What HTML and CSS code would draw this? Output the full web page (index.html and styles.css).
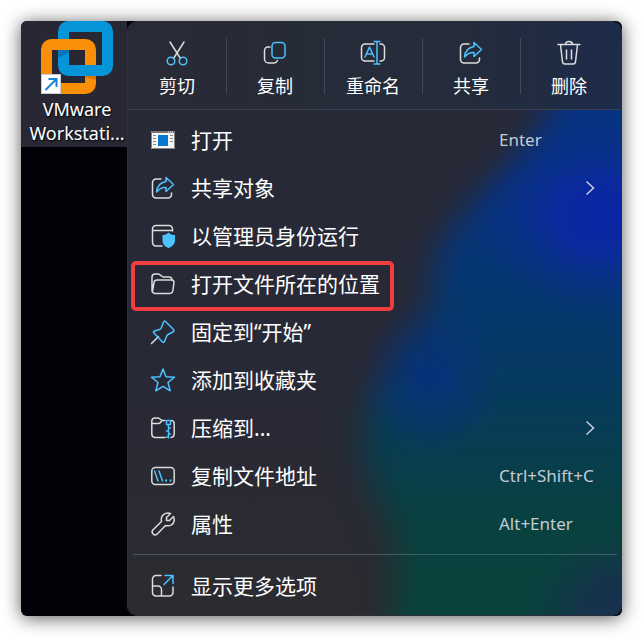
FILE: index.html
```html
<!DOCTYPE html>
<html lang="zh-CN">
<head>
<meta charset="utf-8">
<title>VMware Workstation</title>
<link rel="stylesheet" href="styles.css">
</head>
<body>
<main class="screen">
  <section class="desktop">
    <a class="shortcut" href="#">
      <svg class="shortcut-icon" viewBox="0 0 72 74" aria-hidden="true">
        <rect x="22.500" y="5.500" width="44" height="44" rx="5" fill="none" stroke="#0795d9" stroke-width="11"/>
        <path d="M17 29h11v3l-11 5z" fill="#0878b8"/>
        <rect x="5.500" y="23.500" width="44" height="44" rx="5" fill="none" stroke="#f98e07" stroke-width="11"/>
        <path d="M44 55h11v4l-11-3z" fill="#d97400"/>
        <path d="M28 44H56V55H28z" fill="#0795d9"/>
        <rect x="0.500" y="53.500" width="19" height="19" fill="#fff" stroke="#c9ccd2"/>
        <path d="M4.500 69L15 58.500M7.500 58H15.500V66" fill="none" stroke="#1583dc" stroke-width="2"/>
      </svg>
      <span class="shortcut-name">VMware<br>Workstati...</span>
    </a>
  </section>

  <nav class="menu" aria-label="快捷菜单">
    <svg class="backdrop" viewBox="0 0 495 595" preserveAspectRatio="none" aria-hidden="true">
      <defs>
        <filter id="soft" x="-50%" y="-50%" width="200%" height="200%" color-interpolation-filters="sRGB"><feGaussianBlur stdDeviation="16"/></filter>
        <linearGradient id="base" x1="0" y1="0" x2="0" y2="1">
          <stop offset="0" stop-color="#272936"/><stop offset=".6" stop-color="#282936"/><stop offset="1" stop-color="#2b2b30"/>
        </linearGradient>
        <linearGradient id="glow" x1="0" y1="0" x2="0" y2="1">
          <stop offset="0" stop-color="#073284"/><stop offset=".25" stop-color="#07337f"/><stop offset=".45" stop-color="#06386c"/>
          <stop offset=".62" stop-color="#083c56"/><stop offset=".78" stop-color="#09413f"/><stop offset="1" stop-color="#0a423b"/>
        </linearGradient>
        <radialGradient id="royal">
          <stop offset="0" stop-color="#0a26a8"/><stop offset=".35" stop-color="#0a28a2" stop-opacity=".85"/><stop offset="1" stop-color="#07307f" stop-opacity="0"/>
        </radialGradient>
        <radialGradient id="azure">
          <stop offset="0" stop-color="#06317b"/><stop offset="1" stop-color="#06317b" stop-opacity="0"/>
        </radialGradient>
        <radialGradient id="slate">
          <stop offset="0" stop-color="#18304f"/><stop offset=".4" stop-color="#16324c" stop-opacity=".9"/><stop offset="1" stop-color="#0c3c43" stop-opacity="0"/>
        </radialGradient>
        <linearGradient id="head" x1="0" y1="0" x2="1" y2="0">
          <stop offset="0" stop-color="#292a35"/><stop offset=".7" stop-color="#242c3b"/><stop offset="1" stop-color="#1d2b4b"/>
        </linearGradient>
      </defs>
      <rect width="495" height="595" fill="url(#base)"/>
      <path d="M445 20L420 90L390 140L345 180L308 230L302 290L285 330L242 375L235 430L250 480L270 520L262 640H560V20z" fill="url(#glow)" filter="url(#soft)"/>
      <ellipse cx="475" cy="195" rx="130" ry="105" fill="url(#royal)"/>
      <ellipse cx="305" cy="355" rx="70" ry="80" fill="url(#azure)"/>
      <ellipse cx="495" cy="590" rx="95" ry="85" fill="url(#slate)"/>
      <rect width="495" height="88" fill="url(#head)"/>
    </svg>

    <ul class="actions">
      <li><button class="action" type="button">
        <svg class="icon" viewBox="0 0 24 24" aria-hidden="true"><path d="M5 1L15.500 17.500M19 1L8.500 17.500" class="line"/><g class="accent"><circle cx="6" cy="20" r="3.800"/><circle cx="18" cy="20" r="3.800"/></g></svg>
        <span>剪切</span></button></li>
      <li><button class="action" type="button">
        <svg class="icon" viewBox="0 0 24 24" aria-hidden="true"><path d="M7 6H5a3.500 3.500 0 0 0-3.500 3.500V18A4 4 0 0 0 5.500 22H11a4 4 0 0 0 3.500-2.500" class="line"/><rect x="9" y="1.500" width="13" height="15.500" rx="3.500" class="accent"/></svg>
        <span>复制</span></button></li>
      <li><button class="action" type="button">
        <svg class="icon" viewBox="0 0 24 24" aria-hidden="true"><path d="M13 3H4a3.500 3.500 0 0 0-3.500 3.500v10A3.500 3.500 0 0 0 4 20h9M19 3h1a3.500 3.500 0 0 1 3.500 3.500v10A3.500 3.500 0 0 1 20 20h-1" class="line"/><path d="M4 16L8.500 6L13 16M5.500 13h6M13 .5h6M16 .5v22.500M13 23h6" class="accent"/></svg>
        <span>重命名</span></button></li>
      <li><button class="action" type="button">
        <svg class="icon" viewBox="0 0 24 24" aria-hidden="true"><path d="M10 3H5a3.500 3.500 0 0 0-3.500 3.500v12A3.500 3.500 0 0 0 5 22h12a3.500 3.500 0 0 0 3.500-3.500V17" class="line"/><path d="M15 1.500L22.500 8.500L15 15.500V11.500C10.500 11 8 13 5.500 16C6 10 9.500 6.500 15 5.500z" class="accent"/></svg>
        <span>共享</span></button></li>
      <li><button class="action" type="button">
        <svg class="icon" viewBox="0 0 24 24" aria-hidden="true"><path d="M1 3.500H23M8.500 3.500a3.500 3 0 0 1 7 0M3.500 3.500L5.500 21a2.500 2.500 0 0 0 2.500 2h8a2.500 2.500 0 0 0 2.500-2L20.500 3.500M9.500 9v9M14.500 9v9" class="line"/></svg>
        <span>删除</span></button></li>
    </ul>

    <ul class="items">
      <li><button class="item" type="button">
        <svg class="icon" viewBox="0 0 24 24" aria-hidden="true"><path d="M0 3H24V21H0z" fill="#f6f6f6"/><path d="M0 3H24V5H0z" fill="#777572"/><path d="M.5 3V20.500H23.500V3" fill="none" stroke="#858585"/><path d="M7 7H17V18H7z" fill="#0879cf"/><path d="M2 7.500h3M2 10.500h3M2 13.500h3M2 16.500h3M19 7.500h3M19 10.500h3M19 13.500h3" stroke="#888" /><path d="M17 4h1m1 0h1m1 0h1" stroke="#fff"/></svg>
        <span>打开</span><kbd>Enter</kbd></button></li>
      <li><button class="item" type="button">
        <svg class="icon" viewBox="0 0 24 24" aria-hidden="true"><path d="M10 3H5a3.500 3.500 0 0 0-3.500 3.500v12A3.500 3.500 0 0 0 5 22h12a3.500 3.500 0 0 0 3.500-3.500V17" class="line"/><path d="M15 1.500L22.500 8.500L15 15.500V11.500C10.500 11 8 13 5.500 16C6 10 9.500 6.500 15 5.500z" class="accent"/></svg>
        <span>共享对象</span><svg class="chevron" viewBox="0 0 10 16" aria-hidden="true"><path d="M1.500 1.500L8.500 8L1.500 14.500"/></svg></button></li>
      <li><button class="item" type="button">
        <svg class="icon" viewBox="0 0 24 24" aria-hidden="true"><path d="M11 22H5a3.500 3.500 0 0 1-3.500-3.500V5A3.500 3.500 0 0 1 5 1.500H18A3.500 3.500 0 0 1 21.500 5V7M1.500 6.500H21.500" class="line"/><path d="M17.500 8.500C19.500 10.500 21.500 11 24 11V16C24 20 21.500 22.500 17.500 24C13.500 22.500 11.500 20 11.500 16V11C14 11 15.500 10.500 17.500 8.500z" fill="#4cc2ff"/></svg>
        <span>以管理员身份运行</span></button></li>
      <li><button class="item marked" type="button">
        <svg class="icon" viewBox="0 0 24 24" aria-hidden="true"><path d="M3 21a2.500 2.500 0 0 1-2-3V5A3 3 0 0 1 4 2H7a3 3 0 0 1 2 .8L12 5H18A3 3 0 0 1 21 8M6 8H20.500A2.500 2.500 0 0 1 23 10.500L21.800 19A3 3 0 0 1 19 21.500H4A2.500 2.500 0 0 1 1.500 19L3 10.500A3 3 0 0 1 6 8z" class="line"/></svg>
        <span>打开文件所在的位置</span></button></li>
      <li><button class="item" type="button">
        <svg class="icon" viewBox="0 0 24 24" aria-hidden="true"><path d="M.5 23.500L7.500 16.500" class="line"/><path d="M14.500 1.500L22.500 9.500Q23.500 11 22 12L17 14.500Q16 15 15.500 16.500L13.500 21.500Q12.500 23 11.500 22L2.500 12.500Q2 11.500 3.500 11L8.500 9.500Q10 9 10.500 7.500L12.500 2Q13.500.5 14.500 1.500z" class="accent"/></svg>
        <span>固定到“开始”</span></button></li>
      <li><button class="item" type="button">
        <svg class="icon" viewBox="0 0 24 24" aria-hidden="true"><path d="M12 1L15 8.800L23.500 9.200L17 14.500L19.200 22.800L12 18.300L4.800 22.800L7 14.500L.5 9.200L9 8.800z" class="accent"/></svg>
        <span>添加到收藏夹</span></button></li>
      <li><button class="item" type="button">
        <svg class="icon" viewBox="0 0 24 24" aria-hidden="true"><path d="M14 21.500H4A3.500 3.500 0 0 1 .8 18V5A3.200 3.200 0 0 1 4 2H7a3 3 0 0 1 2 1L11 4.500H14M20.500 4.500a3 3 0 0 1 2.700 3.300V18a3.500 3.500 0 0 1-3.200 3.500M1 7.500H7Q8.500 7.500 9.500 6.500L11 4.500" class="line"/><path d="M15.500 4.500V8.500H19.500V4.500zM17.500 8.500V22M17.500 12h2M15.500 15h2M17.500 18h2M15.500 21h2" class="accent"/></svg>
        <span>压缩到...</span><svg class="chevron" viewBox="0 0 10 16" aria-hidden="true"><path d="M1.500 1.500L8.500 8L1.500 14.500"/></svg></button></li>
      <li><button class="item" type="button">
        <svg class="icon" viewBox="0 0 24 24" aria-hidden="true"><rect x=".8" y="3.500" width="22.400" height="17" rx="3.500" class="line"/><path d="M3.500 7L7 17M8 7L11.500 17" class="accent"/><path d="M14 15.500h2v2h-2zM18.500 15.500h2v2h-2z" fill="#4cc2ff"/></svg>
        <span>复制文件地址</span><kbd>Ctrl+Shift+C</kbd></button></li>
      <li><button class="item" type="button">
        <svg class="icon" viewBox="0 0 24 24" aria-hidden="true"><path d="M19.500 1.500L15.500 5.500V8.500H18.500L22.500 4.500C24 8 23 11 20.500 12.800C18.500 14 16.500 14 14.500 13.500L6 22.200A3 3 0 0 1 1.800 18L10.500 9.500C9.800 6.500 10.500 4 12.800 2.300C14.800 .8 17.200 .6 19.500 1.500z" class="line"/></svg>
        <span>属性</span><kbd>Alt+Enter</kbd></button></li>
    </ul>

    <ul class="items more">
      <li><button class="item" type="button">
        <svg class="icon" viewBox="0 0 24 24" aria-hidden="true"><path d="M10 1.500H5A3.500 3.500 0 0 0 1.500 5V18.500A3.500 3.500 0 0 0 5 22H18.500A3.500 3.500 0 0 0 22 18.500V13M1.500 12H7A3.500 3.500 0 0 1 10.500 15.500V22" class="line"/><path d="M14 1.500H22V9.500M22 1.500L13 10.500" class="accent"/></svg>
        <span>显示更多选项</span></button></li>
    </ul>
  </nav>
</main>
</body>
</html>
```
FILE: styles.css
```css
*,
*::after {
  box-sizing: border-box;
}

body {
  margin: 0;
  padding: 21px 20px 20px 21px;
  background: #fff;
  color: #fff;
  font-family: "Noto Sans", "Noto Sans CJK SC", sans-serif;
}

ul {
  margin: 0;
  padding: 0;
  list-style: none;
}

button {
  border: 0;
  background: none;
  color: inherit;
  font: inherit;
}

.screen {
  display: flex;
  overflow: hidden;
  border-radius: 6px;
  background: #020108;
  box-shadow: 0 2px 18px rgba(0, 0, 0, .65);
}

.desktop {
  flex: 0 0 106px;
}

.shortcut {
  display: flex;
  flex-direction: column;
  align-items: center;
  gap: 2px;
  height: 126px;
  padding-left: 6px;
  background: #272833;
  color: #fff;
  text-align: center;
  text-decoration: none;
  text-shadow: 1px 1px 2px #000;
}

.shortcut-icon {
  width: 72px;
  height: 74px;
}

.shortcut-name {
  font-size: 18px;
  line-height: 24px;
}

.menu {
  position: relative;
  flex: 1;
  min-width: 0;
  overflow: hidden;
  border: 1px solid rgba(110, 120, 140, .4);
  border-radius: 10px;
}

.backdrop {
  position: absolute;
  inset: 0;
  width: 100%;
  height: 100%;
}

.actions {
  position: relative;
  display: grid;
  grid-template-columns: repeat(5, 1fr);
  height: 88px;
  padding-right: 3px;
  border-bottom: 1px solid #3a4050;
}

.actions li + li {
  background: linear-gradient(#414755, #414755) 0 16px / 1px 56px no-repeat;
}

.action {
  display: flex;
  flex-direction: column;
  align-items: center;
  gap: 7px;
  width: 100%;
  padding: 19px 0 0;
  font-size: 18px;
  line-height: 28px;
}

.icon {
  width: 24px;
  height: 24px;
  overflow: visible;
}

.line,
.accent {
  fill: none;
  stroke: #dcdcdc;
  stroke-width: 1.5;
  stroke-linecap: round;
  stroke-linejoin: round;
}

.accent {
  stroke: #4cc2ff;
}

.items {
  position: relative;
  padding: 6px 0;
}

.more {
  margin: 0 4px 0 5px;
  padding: 7px 0 5px;
  border-top: 1px solid rgba(150, 160, 175, .35);
}

.item {
  position: relative;
  display: grid;
  grid-template-columns: 24px 1fr auto;
  column-gap: 16px;
  align-items: center;
  width: 100%;
  height: 48px;
  padding: 0 0 0 23px;
  font-size: 21px;
  line-height: 32px;
  text-align: left;
}

.more .item {
  padding-left: 18px;
}

.item kbd {
  width: 122px;
  color: #c3cbd3;
  font-family: "Noto Sans", sans-serif;
  font-size: 17px;
}

.chevron {
  width: 10px;
  height: 16px;
  margin-right: 26px;
  fill: none;
  stroke: #c9cfe0;
  stroke-width: 1.5;
}

.marked::after {
  position: absolute;
  top: 1px;
  left: 3px;
  width: 263px;
  height: 50px;
  border: 4px solid #f43d3f;
  border-radius: 5px;
  content: "";
}
```
